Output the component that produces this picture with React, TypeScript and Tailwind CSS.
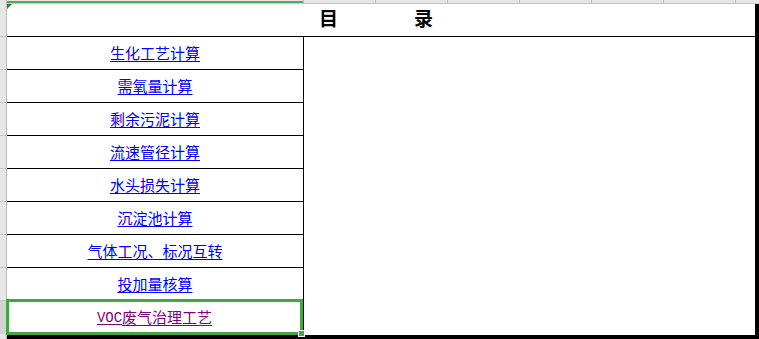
import React from "react";

const links = [
  { label: "生化工艺计算" },
  { label: "需氧量计算" },
  { label: "剩余污泥计算" },
  { label: "流速管径计算" },
  { label: "水头损失计算" },
  { label: "沉淀池计算" },
  { label: "气体工况、标况互转" },
  { label: "投加量核算" },
];

const cjk = { fontFamily: '"Liberation Sans", "Noto Sans CJK SC", sans-serif' };

function Gutter() {
  // row header strip on the left edge of the sheet
  return (
    <div className="flex w-[7px] shrink-0 flex-col border-r border-[#bdbdbd] bg-[#e6e6e6]">
      <div className="h-[37px] shrink-0 border-b border-[#c8c8c8]" />
      {links.map((l) => (
        <div key={l.label} className="h-[33px] shrink-0 border-b border-[#c8c8c8]" />
      ))}
      <div className="h-[33px] shrink-0 bg-[#d4d4d4]" />
      <div className="flex-1" />
    </div>
  );
}

function ColumnHeaders() {
  return (
    <div className="flex h-[4px] shrink-0 border-b border-[#c8c8c8] bg-[#e6e6e6]">
      <div className="w-[296px] shrink-0 border-b-2 border-[#4caf50]" />
      {[0, 1, 2, 3, 4, 5].map((i) => (
        <div key={i} className="w-[72px] shrink-0 border-l border-[#bdbdbd]" />
      ))}
      <div className="flex-1 border-l border-[#bdbdbd]" />
    </div>
  );
}

export default function App() {
  return (
    <div className="flex h-[339px] w-[759px] overflow-hidden bg-white" style={cjk}>
      <Gutter />
      <div className="flex min-w-0 flex-1 flex-col">
        <ColumnHeaders />
        <div className="relative flex flex-1 flex-col border-r-4 border-b-[5px] border-black">
          {/* active-cell corner marker */}
          <div className="absolute left-0 top-0 h-0 w-0 border-t-[5px] border-r-[5px] border-t-[#1e8a1e] border-r-transparent" />
          <div className="flex h-[33px] shrink-0 items-center border-b border-black pl-[312px] text-[19px] font-bold text-black">
            <span>目</span>
            <span className="ml-[76px]">录</span>
          </div>
          <div className="flex flex-1">
            <div className="flex w-[297px] shrink-0 flex-col border-r border-black">
              {links.map((l) => (
                <div
                  key={l.label}
                  className="flex h-[33px] shrink-0 items-center justify-center border-b border-black pt-[2px] text-[15px] text-[#0000ff] underline underline-offset-2"
                >
                  {l.label}
                </div>
              ))}
              <div className="relative -ml-px -mt-[2px] flex h-[36px] shrink-0 items-center justify-center border-[3px] border-[#43a843] pt-[2px] text-[15px] text-[#800080] underline underline-offset-2">
                <span className="font-['Liberation_Mono',monospace] text-[14px]">VOC</span>
                废气治理工艺
                <div className="absolute -bottom-[4px] -right-[4px] h-[5px] w-[5px] bg-[#43a843] ring-1 ring-white" />
              </div>
            </div>
            <div className="flex-1" />
          </div>
        </div>
      </div>
    </div>
  );
}
